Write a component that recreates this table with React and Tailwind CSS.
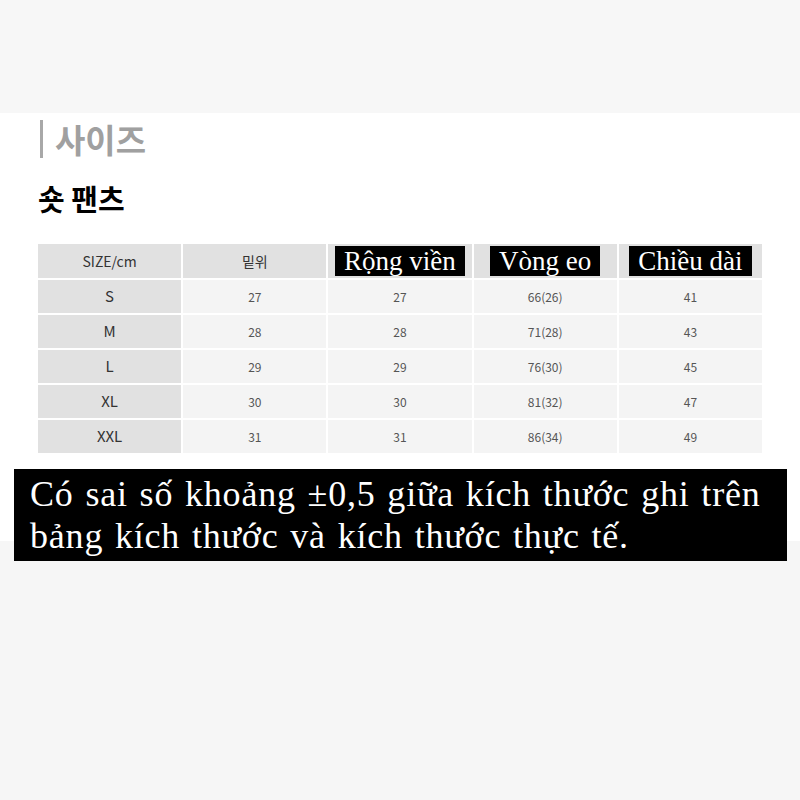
const HEADERS = [
  { label: "SIZE/cm" },
  { label: "밑위" },
  { label: "Rộng viền", boxed: true },
  { label: "Vòng eo", boxed: true },
  { label: "Chiều dài", boxed: true },
];

const ROWS = [
  ["S", "27", "27", "66(26)", "41"],
  ["M", "28", "28", "71(28)", "43"],
  ["L", "29", "29", "76(30)", "45"],
  ["XL", "30", "30", "81(32)", "47"],
  ["XXL", "31", "31", "86(34)", "49"],
];

const sans = "font-['Noto_Sans_CJK_KR','Noto_Sans',sans-serif]";
const serif = "font-['Liberation_Serif',serif]";

function HeaderCell({ label, boxed }) {
  return (
    <div className="h-[34px] bg-[#e1e1e1] flex items-center justify-center">
      {boxed ? (
        <span
          className={`${serif} bg-black text-white text-[27px] leading-[30px] h-[30px] px-[9px] whitespace-nowrap`}
        >
          {label}
        </span>
      ) : (
        <span className="text-[14px] text-[#333]">{label}</span>
      )}
    </div>
  );
}

export default function App() {
  return (
    <div className={`w-[800px] min-h-[800px] bg-[#f6f6f6] ${sans}`}>
      <div className="h-[113px] bg-[#f7f7f7]" />

      <div className="bg-white pl-[38px] pt-[6px]">
        <h2 className="text-[33px] leading-[40px] font-bold text-[#a0a0a0] flex items-center">
          <span className="inline-block w-[3px] h-[38px] bg-[#a8a8a8] ml-[2px] mr-[12px]" />
          사이즈
        </h2>
        <h3 className="mt-[21px] text-[29px] leading-[36px] font-bold text-black">
          숏 팬츠
        </h3>

        <div className="mt-[28px] w-[724px] grid grid-cols-5 gap-x-[2px] gap-y-[2px]">
          {HEADERS.map((h) => (
            <HeaderCell key={h.label} {...h} />
          ))}
          {ROWS.map((row) =>
            row.map((v, i) =>
              i === 0 ? (
                <div
                  key={row[0] + i}
                  className="h-[33px] bg-[#e1e1e1] flex items-center justify-center text-[15px] text-[#333]"
                >
                  {v}
                </div>
              ) : (
                <div
                  key={row[0] + i}
                  className="h-[33px] bg-[#f4f4f4] flex items-center justify-center text-[12px] text-[#555]"
                >
                  {v}
                </div>
              )
            )
          )}
        </div>
        <div className="h-[16px]" />
      </div>

      <div className="bg-[linear-gradient(to_bottom,#ffffff_72px,#f6f6f6_72px)] pl-[14px]">
        <p
          className={`${serif} w-[773px] bg-black text-white text-[36px] leading-[42px] tracking-[0.8px] [word-spacing:2px] pl-[16px] pt-[4px] pb-[4px] whitespace-nowrap`}
        >
          Có sai số khoảng ±0,5 giữa kích thước ghi trên
          <br />
          bảng kích thước và kích thước thực tế.
        </p>
      </div>
    </div>
  );
}
